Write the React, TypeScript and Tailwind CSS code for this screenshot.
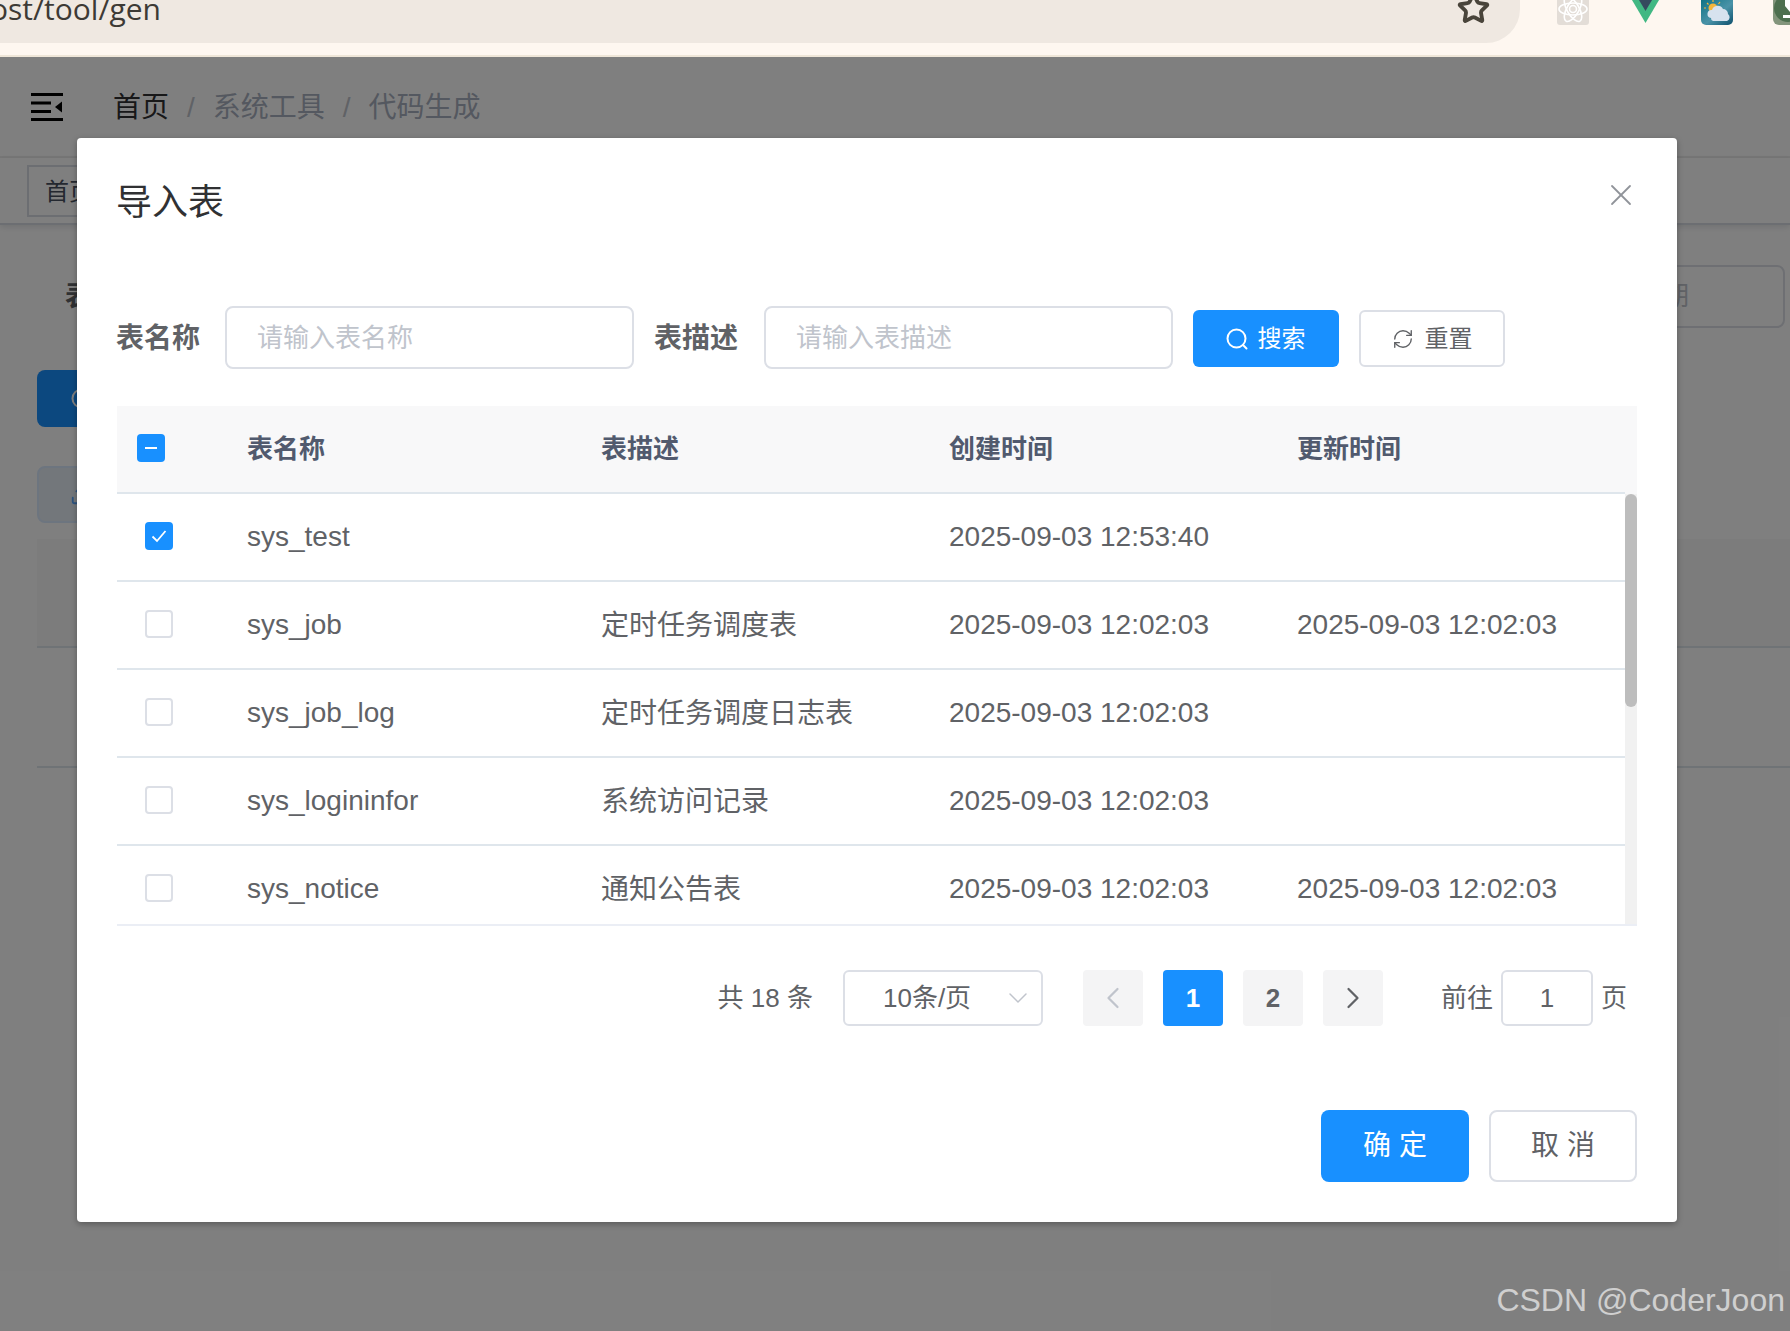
import { ChevronDown, ChevronLeft, ChevronRight, RefreshCw, Star, Upload, X } from 'lucide-react'

const rows = [
  { name: 'sys_test', desc: '', created: '2025-09-03 12:53:40', updated: '', checked: true },
  { name: 'sys_job', desc: '定时任务调度表', created: '2025-09-03 12:02:03', updated: '2025-09-03 12:02:03', checked: false },
  { name: 'sys_job_log', desc: '定时任务调度日志表', created: '2025-09-03 12:02:03', updated: '', checked: false },
  { name: 'sys_logininfor', desc: '系统访问记录', created: '2025-09-03 12:02:03', updated: '', checked: false },
  { name: 'sys_notice', desc: '通知公告表', created: '2025-09-03 12:02:03', updated: '2025-09-03 12:02:03', checked: false },
]

function SearchIcon({ className }: { className: string }) {
  return (
    <svg viewBox="0 0 24 24" fill="none" stroke="currentColor" strokeWidth="2" strokeLinecap="round" className={className}>
      <circle cx="11.5" cy="11.5" r="9" />
      <path d="M18 18l3.500 3.500" />
    </svg>
  )
}

function BrowserBar() {
  return (
    <div className="flex h-[57px] overflow-hidden border-b-2 border-[#efe6d8] bg-[#fef7f0]">
      <div className="flex h-[43px] w-[1520px] shrink-0 items-start overflow-hidden rounded-br-[34px] bg-[#efe8e1]">
        <span className="-ml-[10px] -mt-[11px] font-['Open_Sans',sans-serif] text-[30px] leading-[40px] text-[#3d3a35]">ost/tool/gen</span>
        <Star size={33} strokeWidth={2.8} className="-mt-[8px] ml-auto mr-[30px] text-[#49443a]" />
      </div>
      <div className="ml-[37px] h-[25px] w-[32px] shrink-0 overflow-hidden rounded-b-[3px] bg-[#e3ddd7]">
        <svg viewBox="0 0 32 25" className="h-[25px] w-[32px]" fill="none" stroke="#fff" strokeWidth="1.6">
          <circle cx="16" cy="9" r="3.500" />
          <ellipse cx="16" cy="9" rx="14" ry="6" />
          <ellipse cx="16" cy="9" rx="14" ry="6" transform="rotate(60 16 9)" />
          <ellipse cx="16" cy="9" rx="14" ry="6" transform="rotate(120 16 9)" />
        </svg>
      </div>
      <svg viewBox="0 0 27 23" className="ml-[43px] h-[23px] w-[27px] shrink-0">
        <path d="M0 0h27L13.500 23z" fill="#41b883" />
        <path d="M7 0h13l-6.500 11z" fill="#35495e" />
      </svg>
      <svg viewBox="0 0 32 25" className="ml-[42px] h-[25px] w-[32px] shrink-0">
        <defs>
          <linearGradient id="sky" x1="0" y1="0" x2="1" y2="1">
            <stop offset="0" stopColor="#0f7386" />
            <stop offset="0.55" stopColor="#4a93a8" />
            <stop offset="1" stopColor="#0d4f6c" />
          </linearGradient>
        </defs>
        <path d="M0 0h32v20a5 5 0 0 1-5 5H5a5 5 0 0 1-5-5z" fill="url(#sky)" />
        <circle cx="12" cy="8" r="4.500" fill="#f4b63c" />
        <path d="M12 0v2M5 8H3M6 3l1.500 1.500M19 2l-1.500 2" stroke="#f4b63c" strokeWidth="1.200" />
        <path d="M10 18a4 4 0 0 1 1-8 6 6 0 0 1 11-1 5 5 0 0 1 5 5 4 4 0 0 1-1 7H12a3 3 0 0 1-2-3z" fill="#d7e2ee" />
      </svg>
      <div className="ml-[40px] h-[25px] w-[17px] shrink-0 overflow-hidden rounded-bl-[6px] bg-[#83957c]">
        <svg viewBox="0 0 17 25" className="h-[25px] w-[17px]">
          <circle cx="15" cy="8" r="14" fill="#4d6f4f" />
          <path d="M12 0h5v12l-5-6z" fill="#fff" />
          <path d="M10 15h7v3h-7z" fill="#fff" />
        </svg>
      </div>
    </div>
  )
}

function PageBehind() {
  return (
    <>
      <div className="flex h-[101px] items-center border-b-2 border-[#eeeeee] bg-white pl-[31px]">
        <svg viewBox="0 0 32 28" className="h-[28px] w-[32px]" fill="#000">
          <path d="M0 0h32v3H0zM0 8.500h20v3H0zM0 17h20v3H0zM0 25h32v3H0z" />
          <path d="M31 8.500v11l-7-5.500z" />
        </svg>
        <div className="ml-[50px] flex items-center pt-[3px] text-[28px]">
          <span className="text-[#303133]">首页</span>
          <span className="mx-[18px] text-[#c0c4cc]">/</span>
          <span className="text-[#a9b0c0]">系统工具</span>
          <span className="mx-[18px] text-[#c0c4cc]">/</span>
          <span className="text-[#a9b0c0]">代码生成</span>
        </div>
      </div>
      <div className="flex h-[67px] items-center border-b-2 border-[#d8dce5] bg-white pl-[27px] shadow-[0_2px_6px_rgba(0,21,41,0.12)]">
        <div className="flex h-[52px] w-[120px] items-center border-2 border-[#d8dce5] pl-[16px] pt-[2px] text-[24px] text-[#495060]">首页</div>
      </div>
      <div className="flex items-center justify-between pl-[65px] pr-[5px] pt-[40px]">
        <span className="text-[28px] font-bold text-[#606266]">表名称</span>
        <div className="flex h-[63px] w-[300px] items-center justify-end rounded-[8px] border-2 border-[#dcdfe6] pr-[94px] text-[26px] text-[#c0c4cc]">期</div>
      </div>
      <div className="pl-[37px] pt-[42px]">
        <div className="flex h-[57px] w-[146px] items-center rounded-[8px] bg-[#1890ff] pl-[33px] text-white">
          <SearchIcon className="h-[24px] w-[24px]" />
        </div>
        <div className="mt-[39px] flex h-[57px] w-[146px] items-center rounded-[8px] border-2 border-[#dbeaff] bg-[#e6eef7] pl-[31px] text-[#5aa7ff]">
          <Upload size={22} strokeWidth={2} />
        </div>
      </div>
      <div className="ml-[37px] mt-[16px]">
        <div className="h-[109px] border-b-2 border-[#dfe6ec] bg-[#f8f8f9]" />
        <div className="h-[120px] border-b-2 border-[#dfe6ec]" />
      </div>
    </>
  )
}

function Checkbox({ checked }: { checked: boolean }) {
  if (checked) {
    return (
      <span className="-mt-[2px] flex h-[28px] w-[28px] items-center justify-center rounded-[4px] bg-[#1890ff]">
        <svg viewBox="0 0 18 18" className="h-[18px] w-[18px]" fill="none" stroke="#fff" strokeWidth="1.8">
          <path d="M2.500 9.500l4.500 4.500L15.500 4" />
        </svg>
      </span>
    )
  }
  return <span className="-mt-[2px] block h-[28px] w-[28px] rounded-[4px] border-2 border-[#dcdfe6] bg-white" />
}

function ImportTable() {
  return (
    <div className="mt-[37px] w-[1520px]">
      <div className="flex h-[88px] bg-[#f8f8f9]">
        <div className="grid w-[1508px] grid-cols-[130px_354px_348px_348px_328px] items-center border-b-2 border-[#dfe6ec] text-[26px] font-bold text-[#515a6e]">
          <div className="pl-[20px]">
            <span className="-mt-[2px] flex h-[28px] w-[28px] items-center justify-center rounded-[4px] bg-[#1890ff]">
              <span className="h-[2px] w-[12px] bg-white" />
            </span>
          </div>
          <div>表名称</div>
          <div>表描述</div>
          <div>创建时间</div>
          <div>更新时间</div>
        </div>
      </div>
      <div className="flex h-[432px] overflow-hidden border-b-2 border-[#ebeef5]">
        <div className="w-[1508px]">
          {rows.map((row) => (
            <div key={row.name} className="grid h-[88px] grid-cols-[130px_354px_348px_348px_328px] items-center border-b-2 border-[#dfe6ec] text-[28px] text-[#606266]">
              <div className="pl-[28px]">
                <Checkbox checked={row.checked} />
              </div>
              <div>{row.name}</div>
              <div className="pt-[2px]">{row.desc}</div>
              <div>{row.created}</div>
              <div>{row.updated}</div>
            </div>
          ))}
        </div>
        <div className="w-[12px] bg-[#f1f1f1]">
          <div className="h-[213px] rounded-[6px] bg-[#bdbdbd]" />
        </div>
      </div>
    </div>
  )
}

function Pagination() {
  const btn = 'flex h-[56px] w-[60px] items-center justify-center rounded-[4px] bg-[#f4f4f5] text-[26px] font-bold text-[#606266]'
  return (
    <div className="mt-[44px] flex h-[56px] w-[1520px] items-center justify-end pr-[10px] text-[26px] text-[#606266]">
      <span>共 18 条</span>
      <div className="ml-[30px] flex h-[56px] w-[200px] items-center justify-between rounded-[6px] border-2 border-[#dcdfe6] pl-[38px] pr-[7px]">
        <span>10条/页</span>
        <ChevronDown size={32} strokeWidth={1.1} className="text-[#c0c4cc]" />
      </div>
      <div className={`${btn} ml-[40px]`}>
        <ChevronLeft size={36} strokeWidth={1.5} className="text-[#c0c4cc]" />
      </div>
      <div className="ml-[20px] flex h-[56px] w-[60px] items-center justify-center rounded-[4px] bg-[#1890ff] text-[26px] font-bold text-white">1</div>
      <div className={`${btn} ml-[20px]`}>2</div>
      <div className={`${btn} ml-[20px]`}>
        <ChevronRight size={36} strokeWidth={1.5} />
      </div>
      <span className="ml-[58px]">前往</span>
      <div className="ml-[8px] flex h-[56px] w-[92px] items-center justify-center rounded-[6px] border-2 border-[#dcdfe6]">1</div>
      <span className="ml-[8px]">页</span>
    </div>
  )
}

function Dialog() {
  return (
    <div className="relative h-[1084px] w-[1600px] rounded-[4px] bg-white px-[40px] shadow-[0_2px_6px_rgba(0,0,0,0.3)]">
      <div className="-ml-[1px] pb-[78px] pt-[40px] text-[36px] leading-[50px] text-[#303133]">导入表</div>
      <X size={36} strokeWidth={1.2} className="absolute right-[38px] top-[39px] text-[#909399]" />
      <div className="flex h-[63px] items-center">
        <span className="-ml-[1px] pt-[2px] text-[28px] font-bold text-[#606266]">表名称</span>
        <input readOnly placeholder="请输入表名称" className="ml-[25px] h-[63px] w-[409px] rounded-[8px] border-2 border-[#dcdfe6] pl-[30px] pt-[2px] text-[26px] outline-none placeholder:text-[#c0c4cc]" />
        <span className="ml-[20px] pt-[2px] text-[28px] font-bold text-[#606266]">表描述</span>
        <input readOnly placeholder="请输入表描述" className="ml-[26px] h-[63px] w-[409px] rounded-[8px] border-2 border-[#dcdfe6] pl-[30px] pt-[2px] text-[26px] outline-none placeholder:text-[#c0c4cc]" />
        <button className="ml-[20px] mt-[2px] flex h-[57px] w-[146px] items-center justify-center gap-[9px] rounded-[6px] bg-[#1890ff] text-[24px] text-white">
          <SearchIcon className="-ml-[2px] h-[24px] w-[24px]" />
          搜索
        </button>
        <button className="ml-[20px] mt-[2px] flex h-[57px] w-[146px] items-center justify-center gap-[11px] rounded-[6px] border-2 border-[#dcdfe6] bg-white text-[24px] text-[#606266]">
          <RefreshCw size={22} strokeWidth={1.5} />
          重置
        </button>
      </div>
      <ImportTable />
      <Pagination />
      <div className="mt-[84px] flex justify-end gap-[20px]">
        <button className="h-[72px] w-[148px] rounded-[8px] bg-[#1890ff] text-[28px] text-white">确 定</button>
        <button className="h-[72px] w-[148px] rounded-[8px] border-2 border-[#dcdfe6] bg-white text-[28px] text-[#606266]">取 消</button>
      </div>
    </div>
  )
}

export default function App() {
  return (
    <div className="h-[1331px] w-[1790px] overflow-hidden bg-white font-['Liberation_Sans','Noto_Sans_CJK_SC',sans-serif]">
      <BrowserBar />
      <div className="relative h-[1274px] overflow-hidden">
        <PageBehind />
        <div className="absolute inset-0 bg-black/50 pl-[77px] pt-[81px]">
          <Dialog />
        </div>
        <div className="absolute bottom-[11px] right-[5px] text-[32px] leading-[40px] text-[#cfcfcf]">CSDN @CoderJoon</div>
      </div>
    </div>
  )
}
